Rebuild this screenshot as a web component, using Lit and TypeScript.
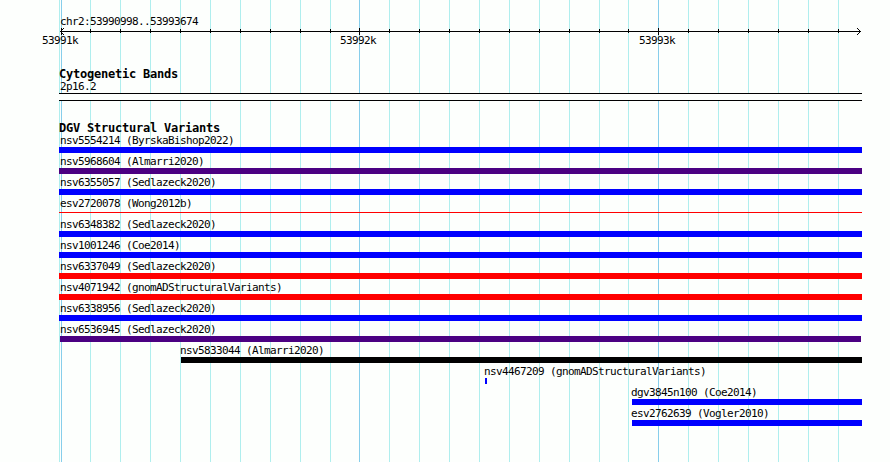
import { LitElement, html, css } from 'lit';
import { customElement, property } from 'lit/decorators.js';

interface Variant {
  name: string;
  start: number;
  end: number;
  color: string;
  label?: number;
  thin?: boolean;
}

const MAJOR = [61, 359, 658];
const MINOR = [
  90, 120, 150, 180, 210, 240, 270, 300, 330,
  389, 419, 449, 479, 509, 539, 569, 599, 628,
  688, 718, 748, 778, 808, 838,
];

const BLUE = '#0000ff';
const PURPLE = '#4b0082';
const RED = '#ff0000';

const VARIANTS: Variant[] = [
  { name: 'nsv5554214 (ByrskaBishop2022)', start: 59, end: 862, color: BLUE },
  { name: 'nsv5968604 (Almarri2020)', start: 59, end: 862, color: PURPLE },
  { name: 'nsv6355057 (Sedlazeck2020)', start: 59, end: 862, color: BLUE },
  { name: 'esv2720078 (Wong2012b)', start: 59, end: 862, color: RED, thin: true },
  { name: 'nsv6348382 (Sedlazeck2020)', start: 59, end: 862, color: BLUE },
  { name: 'nsv1001246 (Coe2014)', start: 59, end: 862, color: BLUE },
  { name: 'nsv6337049 (Sedlazeck2020)', start: 59, end: 862, color: RED },
  { name: 'nsv4071942 (gnomADStructuralVariants)', start: 59, end: 862, color: RED },
  { name: 'nsv6338956 (Sedlazeck2020)', start: 59, end: 862, color: BLUE },
  { name: 'nsv6536945 (Sedlazeck2020)', start: 60, end: 861, color: PURPLE },
  { name: 'nsv5833044 (Almarri2020)', start: 181, end: 862, color: '#000000', label: 180 },
  { name: 'nsv4467209 (gnomADStructuralVariants)', start: 485, end: 487, color: BLUE, label: 484 },
  { name: 'dgv3845n100 (Coe2014)', start: 632, end: 862, color: BLUE, label: 631 },
  { name: 'esv2762639 (Vogler2010)', start: 632, end: 862, color: BLUE, label: 631 },
];

@customElement('genome-ruler')
class GenomeRuler extends LitElement {
  static styles = css`
    :host {
      display: block;
      height: 68px;
    }
    svg {
      display: block;
      shape-rendering: crispEdges;
    }
    text {
      font-family: 'DejaVu Sans Mono', monospace;
      font-size: 11px;
      letter-spacing: -0.62px;
    }
  `;

  render() {
    const ticks = [
      ...MAJOR.map((x) => `M${x} 28h1v7h-1z`),
      ...MINOR.map((x) => `M${x} 29h1v4h-1z`),
    ].join('');
    return html`
      <svg width="890" height="68">
        <path d="M60 31h801v1h-801z" />
        <path d=${ticks} />
        <path d="M61 30h1v3h-1z M62 29h1v1h-1z M62 33h1v1h-1z M63 28h1v1h-1z M63 34h1v1h-1z" />
        <path d="M859 30h1v3h-1z M858 29h1v1h-1z M858 33h1v1h-1z M857 28h1v1h-1z M857 34h1v1h-1z" />
        <text x="60" y="25">chr2:53990998..53993674</text>
        <text x="42" y="44">53991k</text>
        <text x="340" y="44">53992k</text>
        <text x="639" y="44">53993k</text>
      </svg>
    `;
  }
}

@customElement('variant-row')
class VariantRow extends LitElement {
  static styles = css`
    :host {
      display: block;
      height: 21px;
    }
    .name {
      height: 13px;
      line-height: 13px;
      white-space: pre;
    }
    .slot {
      display: flex;
      height: 6px;
    }
    .bar {
      height: 6px;
    }
    .thin {
      height: 1px;
      margin-top: 2px;
    }
  `;

  @property({ attribute: false }) variant!: Variant;

  render() {
    const v = this.variant;
    return html`
      <div class="name" style="margin-left:${v.label ?? 60}px">${v.name}</div>
      <div class="slot">
        <div
          class="bar ${v.thin ? 'thin' : ''}"
          style="margin-left:${v.start}px;width:${v.end - v.start}px;background:${v.color}"
        ></div>
      </div>
    `;
  }
}

@customElement('app-root')
class AppRoot extends LitElement {
  static styles = css`
    :host {
      display: block;
      position: relative;
      width: 890px;
      height: 462px;
      overflow: hidden;
      background: #fdfffd;
      color: #000;
      font-family: 'DejaVu Sans Mono', monospace;
      font-size: 11px;
      letter-spacing: -0.62px;
    }
    .grid {
      position: absolute;
      inset: 0;
      shape-rendering: crispEdges;
    }
    .minor {
      fill: #afeeee;
    }
    .major {
      fill: #87ceeb;
    }
    .tracks {
      position: relative;
    }
    .title {
      height: 12px;
      margin-left: 59px;
      font-size: 12px;
      font-weight: bold;
      line-height: 13px;
      letter-spacing: -0.225px;
    }
    .band-name {
      height: 13px;
      margin-left: 60px;
      line-height: 13px;
    }
    .band {
      box-sizing: border-box;
      width: 803px;
      height: 8px;
      margin: 0 0 21px 59px;
      border: solid #000;
      border-width: 1px 0;
      background: #fdfffd;
    }
  `;

  render() {
    return html`
      <svg class="grid" width="890" height="462">
        <path class="minor" d=${[59, ...MINOR].map((x) => `M${x} 0h1v462h-1z`).join('')} />
        <path class="major" d=${MAJOR.map((x) => `M${x} 0h1v462h-1z`).join('')} />
      </svg>
      <div class="tracks">
        <genome-ruler></genome-ruler>
        <div class="title">Cytogenetic Bands</div>
        <div class="band-name">2p16.2</div>
        <div class="band"></div>
        <div class="title">DGV Structural Variants</div>
        ${VARIANTS.map((v) => html`<variant-row .variant=${v}></variant-row>`)}
      </div>
    `;
  }
}
